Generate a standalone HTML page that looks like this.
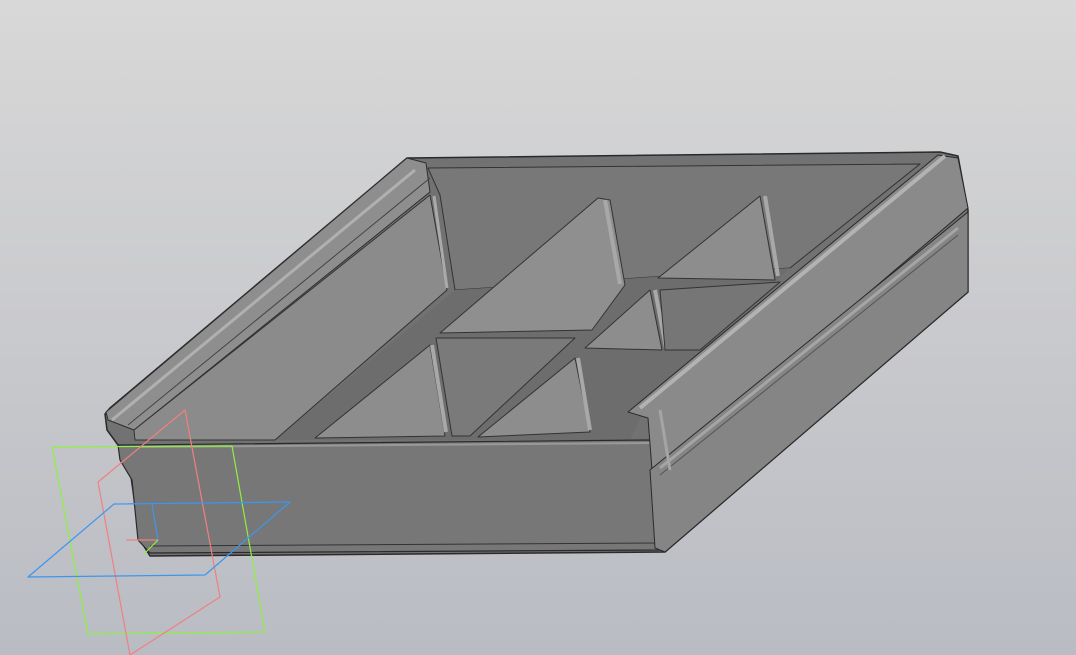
<!DOCTYPE html>
<html><head><meta charset="utf-8"><style>
html,body{margin:0;padding:0;width:1076px;height:655px;overflow:hidden;background:linear-gradient(#d8d8d8,#c6c7cb 60%,#b9bcc3);}
svg{display:block}
</style></head><body>
<svg width="1076" height="655" viewBox="0 0 1076 655" xmlns="http://www.w3.org/2000/svg" stroke-linejoin="round">
<!-- silhouette -->
<polygon points="407,158 940,152 958,156 968,210 968,292 665,552 150,556 140,540 130,470 118,445 107,430 105,414 110,408" fill="#727272" stroke="#2a2a2a" stroke-width="1.5"/>
<!-- back inner wall -->
<polygon points="428,168 920,164 790,268 455,290 440,195" fill="#787878" stroke="#333" stroke-width="1"/>
<!-- floor -->
<polygon points="455,290 790,268 650,400 630,440 275,440" fill="#6d6d6d"/>
<!-- left rail top -->
<polygon points="407,158 426,163 430,192 134,430 108,420 106,412" fill="#8e8e8e" stroke="#2e2e2e" stroke-width="1"/>
<line x1="415" y1="170" x2="112" y2="420" stroke="#b0b0b0" stroke-width="3"/>
<line x1="430" y1="178" x2="128" y2="425" stroke="#444" stroke-width="1"/>
<!-- left inner wall -->
<polygon points="430,195 447,290 275,440 135,440 134,430" fill="#8b8b8b" stroke="#333" stroke-width="1"/>
<line x1="434" y1="196" x2="447" y2="288" stroke="#aaa" stroke-width="3"/>
<!-- dividers / lit faces -->
<polygon points="440,333 598,198 610,200 625,285 592,330" fill="#8f8f8f" stroke="#333" stroke-width="1"/>
<line x1="605" y1="200" x2="620" y2="284" stroke="#a8a8a8" stroke-width="4"/>
<polygon points="436,338 575,338 470,436 452,436" fill="#7a7a7a" stroke="#333" stroke-width="1"/>
<polygon points="315,438 430,345 445,436" fill="#8d8d8d" stroke="#333" stroke-width="1"/>
<line x1="432" y1="345" x2="446" y2="432" stroke="#a8a8a8" stroke-width="4"/>
<polygon points="478,437 575,358 590,432" fill="#8d8d8d" stroke="#333" stroke-width="1"/>
<line x1="578" y1="358" x2="590" y2="430" stroke="#a8a8a8" stroke-width="4"/>
<polygon points="658,278 760,196 775,280" fill="#8d8d8d" stroke="#333" stroke-width="1"/>
<line x1="765" y1="196" x2="778" y2="276" stroke="#a8a8a8" stroke-width="4"/>
<polygon points="585,348 650,290 662,350" fill="#8d8d8d" stroke="#333" stroke-width="1"/>
<line x1="655" y1="290" x2="666" y2="348" stroke="#a8a8a8" stroke-width="4"/>
<polygon points="660,290 780,282 700,350 665,350" fill="#767676" stroke="#333" stroke-width="1"/>
<!-- front face -->
<polygon points="118,445 650,440 662,550 150,553 138,540 132,480 120,460" fill="#777777" stroke="#2a2a2a" stroke-width="1.2"/>
<line x1="140" y1="447" x2="650" y2="443" stroke="#999" stroke-width="2"/>
<line x1="150" y1="546" x2="658" y2="543" stroke="#333" stroke-width="1"/>
<!-- right rail -->
<polygon points="628,412 938,155 958,158 968,208 660,470 652,470 648,418" fill="#8a8a8a" stroke="#2a2a2a" stroke-width="1"/>
<line x1="640" y1="408" x2="945" y2="156" stroke="#b2b2b2" stroke-width="4"/>
<polygon points="650,470 968,212 968,292 665,552 655,548" fill="#858585" stroke="#2a2a2a" stroke-width="1"/>
<line x1="660" y1="468" x2="958" y2="228" stroke="#a5a5a5" stroke-width="3"/>
<line x1="660" y1="475" x2="958" y2="235" stroke="#555" stroke-width="1"/>
<line x1="660" y1="410" x2="670" y2="470" stroke="#a5a5a5" stroke-width="3"/>
<!-- planes -->
<polygon points="52,447 232,446 265,632 88,634" fill="none" stroke="#8ef040" stroke-width="1.2"/>
<polygon points="98,482 185,410 220,597 130,655" fill="none" stroke="#f08080" stroke-width="1.2"/>
<polygon points="28,577 114,504 290,502 205,575" fill="none" stroke="#3c96f0" stroke-width="1.2"/>
<line x1="152" y1="504" x2="158" y2="540" stroke="#3c96f0" stroke-width="1.2"/>
<line x1="126" y1="540" x2="158" y2="540" stroke="#f08080" stroke-width="1.2"/>
<line x1="144" y1="554" x2="158" y2="540" stroke="#8ef040" stroke-width="1.2"/>
</svg>
</body></html>
